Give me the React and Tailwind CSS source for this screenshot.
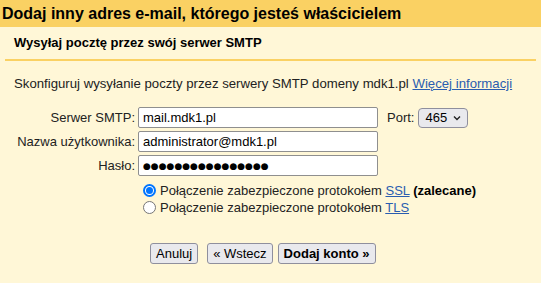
import React from "react";

function Radio({ checked }) {
  return checked ? (
    <span className="inline-flex h-[13px] w-[13px] shrink-0 items-center justify-center rounded-full border-2 border-[#0075ff] bg-white">
      <span className="h-[7px] w-[7px] rounded-full bg-[#0075ff]" />
    </span>
  ) : (
    <span className="inline-block h-[13px] w-[13px] shrink-0 rounded-full border border-[#767676] bg-white" />
  );
}

function Field({ label, children }) {
  return (
    <div className="flex items-center">
      <label className="w-[136px] pr-[1px] text-right">{label}</label>
      <div className="ml-[2px] flex items-center">{children}</div>
    </div>
  );
}

const inputCls =
  "h-[21px] w-[240px] rounded-[2px] border border-[#8f8f8f] bg-white px-[4px] text-black outline-none";

export default function App() {
  return (
    <div className="h-[283px] w-[541px] overflow-hidden bg-[#fff7d7] text-[13px] text-[#222] font-['Liberation_Sans',Arial,sans-serif]">
      <div className="flex h-[27px] items-center bg-[#fad163] pl-[2px] text-[16px] font-bold text-black">
        Dodaj inny adres e-mail, którego jesteś właścicielem
      </div>

      <div className="px-[5px]">
        <div className="flex h-[34px] items-center border-b-2 border-[#fad163] pl-[9px] font-bold text-black">
          Wysyłaj pocztę przez swój serwer SMTP
        </div>

        <p className="mt-[15px] pl-[9px] text-[13.2px] leading-[16px]">
          Skonfiguruj wysyłanie poczty przez serwery SMTP domeny mdk1.pl{" "}
          <a href="#" className="text-[#2a5db0] underline">
            Więcej informacji
          </a>
        </p>
      </div>

      <div className="mt-[15px] flex flex-col gap-[3px]">
        <Field label="Serwer SMTP:">
          <input className={`${inputCls} text-[13px]`} defaultValue="mail.mdk1.pl" />
          <span className="ml-[9px]">Port:</span>
          <span className="ml-[4px] flex h-[20px] w-[50px] items-center justify-between rounded-[4px] border border-[#8f8f9d] bg-[#e9e9ed] pl-[6px] pr-[5px] text-black">
            465
            <svg width="10" height="10" viewBox="0 0 10 10" fill="none">
              <path d="M2 3.5 L5 6.5 L8 3.5" stroke="#222" strokeWidth="1.4" />
            </svg>
          </span>
        </Field>
        <Field label="Nazwa użytkownika:">
          <input className={`${inputCls} text-[13px]`} defaultValue="administrator@mdk1.pl" />
        </Field>
        <Field label="Hasło:">
          <input
            readOnly
            className={`${inputCls} text-[9px] font-['DejaVu_Sans',sans-serif]`}
            value="●●●●●●●●●●●●●●●●"
          />
        </Field>
      </div>

      <div className="mt-[6px] ml-[143px] flex flex-col">
        <div className="flex h-[17px] items-center gap-[4px]">
          <Radio checked />
          <span>
            Połączenie zabezpieczone protokołem{" "}
            <a href="#" className="text-[#2a5db0] underline">SSL</a>{" "}
            <b className="text-black">(zalecane)</b>
          </span>
        </div>
        <div className="flex h-[17px] items-center gap-[4px]">
          <Radio />
          <span>
            Połączenie zabezpieczone protokołem{" "}
            <a href="#" className="text-[#2a5db0] underline">TLS</a>
          </span>
        </div>
      </div>

      <div className="mt-[27px] ml-[150px] flex items-center">
        <button className="h-[21px] rounded-[3px] border border-[#8f8f9d] bg-[#e9e9ed] px-[5px] text-black">
          Anuluj
        </button>
        <button className="ml-[9px] h-[21px] rounded-[3px] border border-[#8f8f9d] bg-[#e9e9ed] px-[5px] text-black">
          « Wstecz
        </button>
        <button className="ml-[5px] h-[21px] rounded-[3px] border border-[#8f8f9d] bg-[#e9e9ed] px-[5px] font-bold text-black">
          Dodaj konto »
        </button>
      </div>
    </div>
  );
}
